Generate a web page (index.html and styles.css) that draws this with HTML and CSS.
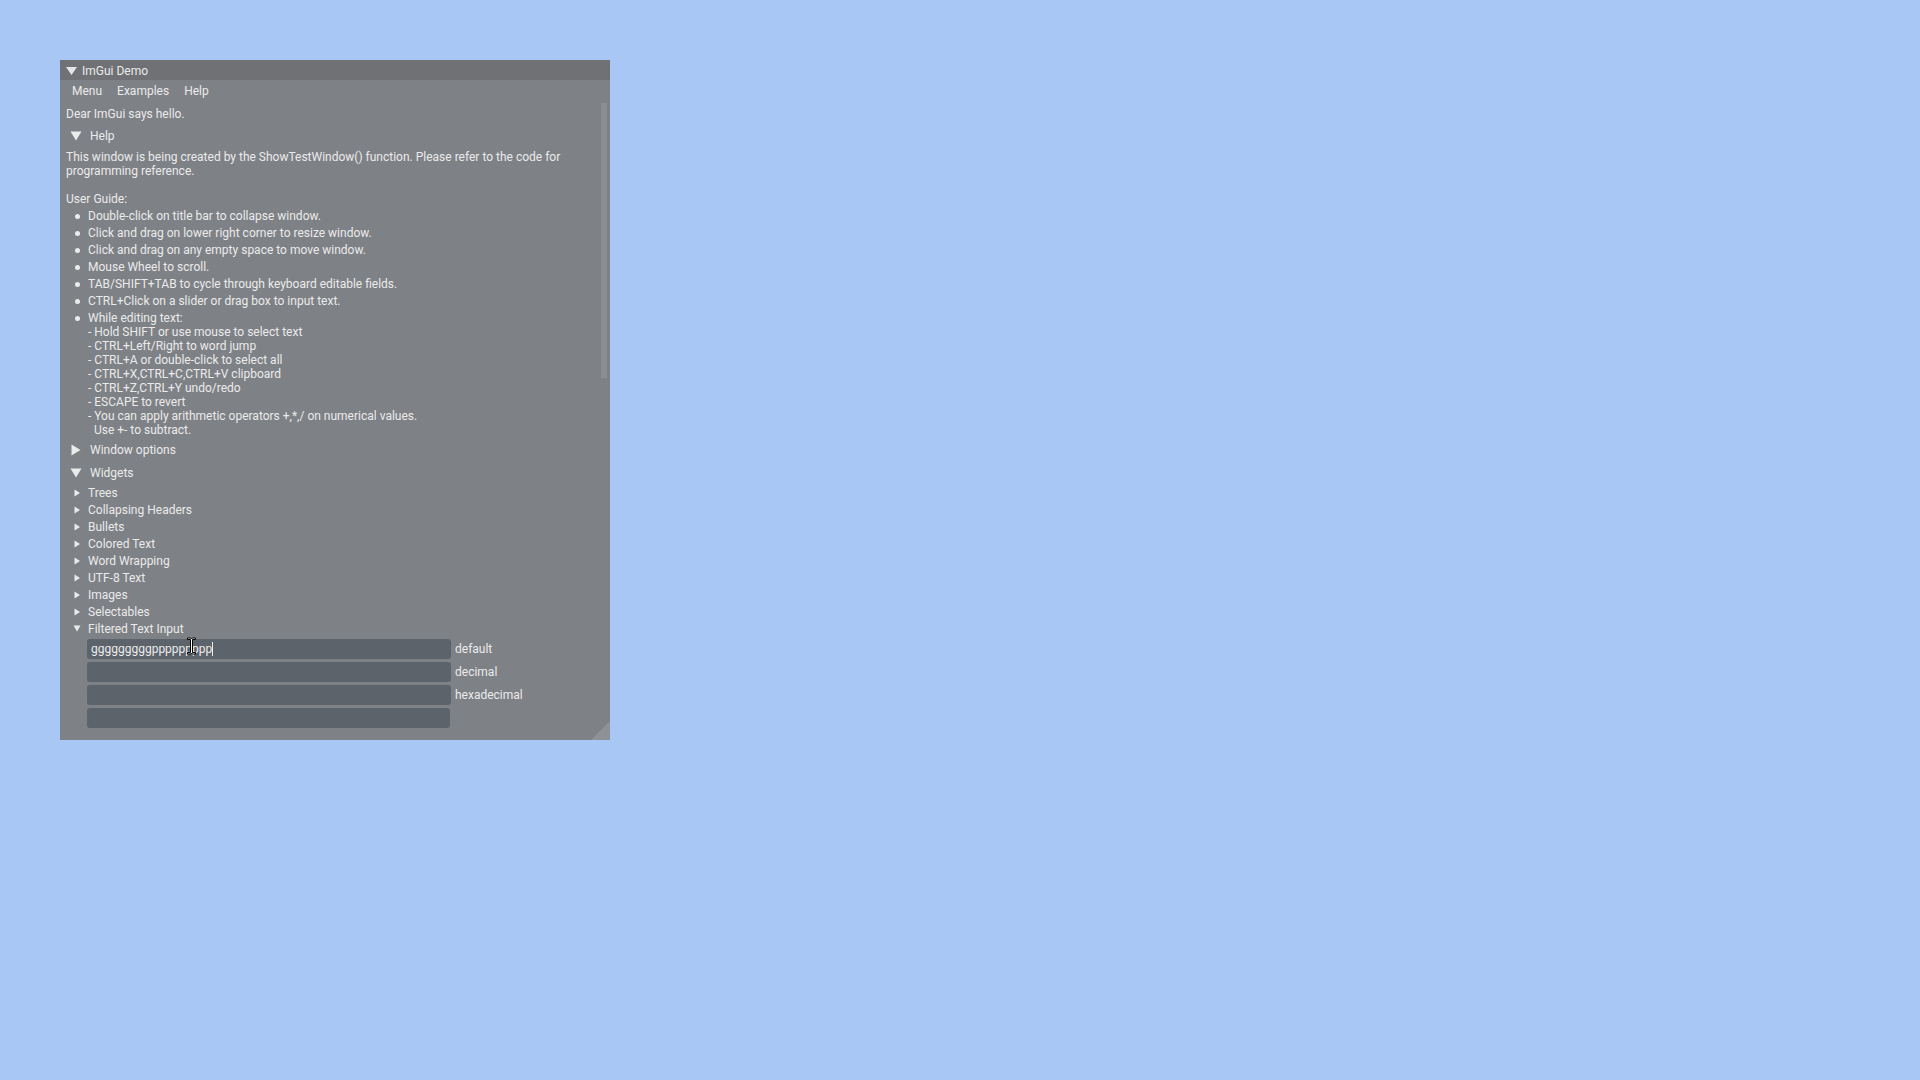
FILE: index.html
```html
<!DOCTYPE html>
<html>
<head>
<meta charset="utf-8">
<title>ImGui Demo</title>
<link rel="stylesheet" href="styles.css">
</head>
<body>
<div class="window">
  <div class="titlebar">
    <svg class="arrow" width="11" height="10" viewBox="0 0 11 10"><polygon points="0,1 11,1 5.5,9" fill="#e6e6e6"/></svg>
    <span>ImGui Demo</span>
  </div>
  <div class="menubar">
    <span class="menu-item">Menu</span>
    <span class="menu-item">Examples</span>
    <span class="menu-item">Help</span>
  </div>
  <div class="content">
    <div class="line">Dear ImGui says hello.</div>
    <div class="header first">
      <svg class="arrow" width="12" height="12" viewBox="0 0 12 12"><polygon points="0.5,1.5 11.5,1.5 6,10.5" fill="#ebebeb"/></svg>
      <span>Help</span>
    </div>
    <div class="para">This window is being created by the ShowTestWindow() function. Please refer to the code for
programming reference.

User Guide:</div>
    <div class="bullets">
      <div class="bullet"><span class="dot"></span><span class="btext">Double-click on title bar to collapse window.</span></div>
      <div class="bullet"><span class="dot"></span><span class="btext">Click and drag on lower right corner to resize window.</span></div>
      <div class="bullet"><span class="dot"></span><span class="btext">Click and drag on any empty space to move window.</span></div>
      <div class="bullet"><span class="dot"></span><span class="btext">Mouse Wheel to scroll.</span></div>
      <div class="bullet"><span class="dot"></span><span class="btext">TAB/SHIFT+TAB to cycle through keyboard editable fields.</span></div>
      <div class="bullet"><span class="dot"></span><span class="btext">CTRL+Click on a slider or drag box to input text.</span></div>
      <div class="bullet"><span class="dot"></span><span class="btext">While editing text:
- Hold SHIFT or use mouse to select text
- CTRL+Left/Right to word jump
- CTRL+A or double-click to select all
- CTRL+X,CTRL+C,CTRL+V clipboard
- CTRL+Z,CTRL+Y undo/redo
- ESCAPE to revert
- You can apply arithmetic operators +,*,/ on numerical values.
  Use +- to subtract.</span></div>
    </div>
    <div class="header">
      <svg class="arrow" width="12" height="12" viewBox="0 0 12 12"><polygon points="1.5,0.5 10.5,6 1.5,11.5" fill="#ebebeb"/></svg>
      <span>Window options</span>
    </div>
    <div class="header">
      <svg class="arrow" width="12" height="12" viewBox="0 0 12 12"><polygon points="0.5,1.5 11.5,1.5 6,10.5" fill="#ebebeb"/></svg>
      <span>Widgets</span>
    </div>
    <div class="tree">
      <div class="node"><svg class="arrow" width="10" height="10" viewBox="0 0 10 10"><polygon points="3.5,1.5 9,5 3.5,8.5" fill="#ebebeb"/></svg><span>Trees</span></div>
      <div class="node"><svg class="arrow" width="10" height="10" viewBox="0 0 10 10"><polygon points="3.5,1.5 9,5 3.5,8.5" fill="#ebebeb"/></svg><span>Collapsing Headers</span></div>
      <div class="node"><svg class="arrow" width="10" height="10" viewBox="0 0 10 10"><polygon points="3.5,1.5 9,5 3.5,8.5" fill="#ebebeb"/></svg><span>Bullets</span></div>
      <div class="node"><svg class="arrow" width="10" height="10" viewBox="0 0 10 10"><polygon points="3.5,1.5 9,5 3.5,8.5" fill="#ebebeb"/></svg><span>Colored Text</span></div>
      <div class="node"><svg class="arrow" width="10" height="10" viewBox="0 0 10 10"><polygon points="3.5,1.5 9,5 3.5,8.5" fill="#ebebeb"/></svg><span>Word Wrapping</span></div>
      <div class="node"><svg class="arrow" width="10" height="10" viewBox="0 0 10 10"><polygon points="3.5,1.5 9,5 3.5,8.5" fill="#ebebeb"/></svg><span>UTF-8 Text</span></div>
      <div class="node"><svg class="arrow" width="10" height="10" viewBox="0 0 10 10"><polygon points="3.5,1.5 9,5 3.5,8.5" fill="#ebebeb"/></svg><span>Images</span></div>
      <div class="node"><svg class="arrow" width="10" height="10" viewBox="0 0 10 10"><polygon points="3.5,1.5 9,5 3.5,8.5" fill="#ebebeb"/></svg><span>Selectables</span></div>
      <div class="node"><svg class="arrow" width="10" height="10" viewBox="0 0 10 10"><polygon points="2.5,1.5 9.5,1.5 6,7.5" fill="#ebebeb"/></svg><span>Filtered Text Input</span></div>
    </div>
    <div class="inputs">
      <div class="field-row"><div class="field"><span>gggggggggppppppppp</span><span class="caret"></span></div><span class="label">default</span></div>
      <div class="field-row"><div class="field"></div><span class="label">decimal</span></div>
      <div class="field-row"><div class="field"></div><span class="label">hexadecimal</span></div>
      <div class="field-row"><div class="field last"></div></div>
    </div>
  </div>
  <div class="scrollbar"></div>
  <svg class="grip" width="19" height="19" viewBox="0 0 19 19"><polygon points="0,19 19,19 19,0" fill="#8e9196"/></svg>
</div>
<svg class="ibeam" width="11" height="18" viewBox="0 0 11 18">
  <path d="M1.5,1 H4.5 L5.5,2 L6.5,1 H9.5 V2.5 H6.5 V15.5 H9.5 V17 H6.5 L5.5,16 L4.5,17 H1.5 V15.5 H4.5 V2.5 H1.5 Z" fill="#ffffff" stroke="#000000" stroke-width="1"/>
</svg>
</body>
</html>
```

FILE: styles.css
```css
* { box-sizing: border-box; margin: 0; padding: 0; }

body {
  margin: 0;
  width: 1920px;
  height: 1080px;
  overflow: hidden;
  position: relative;
  background: #a8c7f5;
  font-family: Roboto, "Liberation Sans", sans-serif;
  font-size: 12px;
  line-height: 14px;
  color: #ebebeb;
}

.window {
  position: absolute;
  left: 60px;
  top: 60px;
  width: 550px;
  height: 680px;
  background: #7e8186;
  overflow: hidden;
}

.titlebar {
  height: 20px;
  padding-top: 1px;
  background: #6f7175;
  display: flex;
  align-items: center;
  padding-left: 6px;
  gap: 5px;
}

.arrow { display: block; flex: none; }

.menubar {
  height: 20px;
  padding-top: 2px;
  display: flex;
  align-items: center;
  padding-left: 12px;
  gap: 15px;
}

.content {
  padding: 7px 0 0 6px;
}

.line { height: 14px; white-space: pre; }

.header {
  height: 20px;
  margin-top: 3px;
  padding-left: 4px;
  display: flex;
  align-items: center;
  gap: 8px;
}

.header.first { margin-top: 5px; }

.para {
  margin-top: 4px;
  white-space: pre;
}

.bullets {
  margin-top: 3px;
  display: flex;
  flex-direction: column;
  gap: 3px;
}

.bullet {
  display: flex;
  align-items: flex-start;
  padding-left: 9px;
}

.dot {
  width: 5px;
  height: 5px;
  border-radius: 50%;
  background: #ebebeb;
  margin-top: 4.5px;
  margin-right: 8px;
  flex: none;
}

.btext { white-space: pre; }

.tree {
  margin-top: 3px;
  display: flex;
  flex-direction: column;
  gap: 3px;
}

.node {
  height: 14px;
  display: flex;
  align-items: center;
  padding-left: 5px;
  gap: 7px;
}

.inputs {
  margin-top: 3px;
  padding-left: 21px;
  display: flex;
  flex-direction: column;
  gap: 3px;
}

.field-row {
  height: 20px;
  display: flex;
  align-items: center;
}

.field {
  width: 364px;
  height: 20px;
  background: #5c636b;
  border-radius: 3px;
  padding-left: 4px;
  display: flex;
  align-items: center;
}

.field.last { width: 363px; }

.caret {
  display: block;
  width: 1px;
  height: 14px;
  background: #ebebeb;
}

.label { margin-left: 4px; }

.scrollbar {
  position: absolute;
  left: 541px;
  top: 43px;
  width: 6px;
  height: 275px;
  background: #8b8e92;
}

.grip {
  position: absolute;
  right: 0;
  bottom: 0;
  display: block;
}

.ibeam {
  position: absolute;
  left: 186px;
  top: 637px;
  display: block;
}
```
